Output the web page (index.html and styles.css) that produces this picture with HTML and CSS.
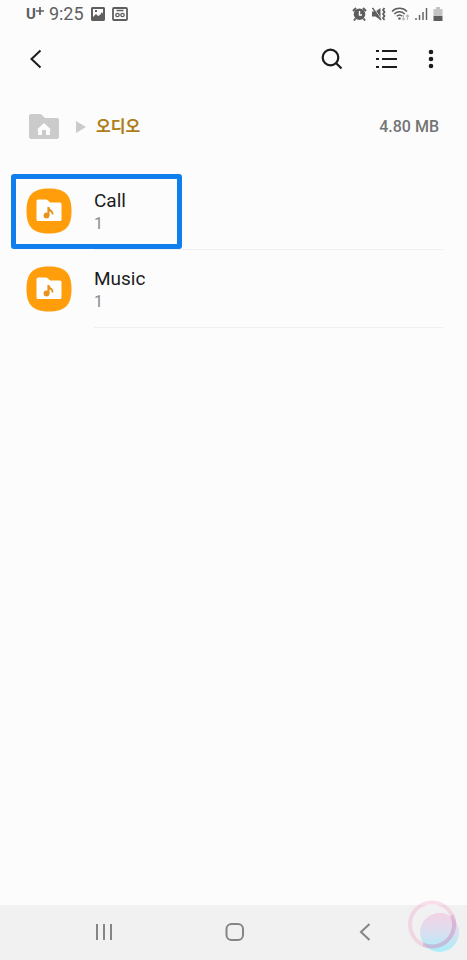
FILE: index.html
```html
<!DOCTYPE html>
<html lang="ko">
<head>
<meta charset="utf-8">
<meta name="viewport" content="width=device-width, initial-scale=1">
<title>오디오</title>
<link rel="stylesheet" href="styles.css">
</head>
<body>
<header class="status">
  <span class="carrier">U<svg width="8" height="10" viewBox="0 0 8 10"><path d="M4 2v8M0 6h8" stroke="currentColor" stroke-width="1.700"/></svg></span>
  <span class="clock">9:25</span>
  <svg class="note" width="14" height="14" viewBox="0 0 14 14"><path fill="currentColor" fill-rule="evenodd" d="M1 0h12l1 1v12l-1 1H1l-1-1V1zM2 2v8l3-3 2 2 2-1 2-3 1 2V2zM4 3h2v2H4z"/></svg>
  <svg class="note" width="16" height="14" viewBox="0 0 16 14" fill="none" stroke="currentColor"><rect x="1" y="1" width="14" height="12" rx="1" stroke-width="1.800"/><path d="M4.500 3.500h7" stroke-width="1.500"/><circle cx="5.500" cy="8" r="1.700" stroke-width="1.300"/><circle cx="10.500" cy="8" r="1.700" stroke-width="1.300"/></svg>
  <span class="system">
    <svg width="15" height="14" viewBox="0 0 15 14"><circle cx="7.500" cy="7.200" r="5.800" fill="currentColor"/><path d="M1 4l3-3M14 4l-3-3M3.500 11.500L2 13.500M11.500 11.500l1.500 2" stroke="currentColor" stroke-width="2"/><path d="M7.500 4v4H10" fill="none" stroke="#fcfcfc" stroke-width="1.400"/></svg>
    <svg width="14" height="14" viewBox="0 0 14 14"><path d="M0 4.500h3.500L8.500 1v12l-5-3.500H0z" fill="currentColor"/><path d="M1.500.5l8 12" stroke="#fcfcfc" stroke-width="1"/><path d="M.5 1l8.500 12" stroke="currentColor" stroke-width="1.300"/><path d="M12.500 1l-1.500 2 1.500 2-1.500 2 1.500 2-1.500 2 1.500 2" fill="none" stroke="currentColor" stroke-width="1.800"/></svg>
    <svg width="19" height="14" viewBox="0 0 19 14" fill="none" stroke="currentColor" stroke-width="1.500"><path d="M1 4.500C5 .2 12 .2 16 4.500M3.300 7c3-3 7.400-3 10.400 0M5.700 9.300c1.700-1.600 4-1.600 5.600 0"/><circle cx="8.500" cy="11.500" r="1.200" fill="currentColor" stroke="none"/><g stroke="#bbb" stroke-width="1.200"><path d="M12.500 8v5M11 11.500l1.500 1.500 1.500-1.500M16.500 13V8M15 9.500L16.500 8 18 9.500"/></g></svg>
    <svg width="13" height="14" viewBox="0 0 13 14" stroke="currentColor" stroke-width="1.400"><path d="M1 11v2M4.500 8v5M8 5v8M11.500 1v12"/></svg>
    <svg width="10" height="14" viewBox="0 0 10 14"><path d="M3 0h4v2h2.500v7H.5V2H3z" fill="#c4c4c4"/><path d="M.5 9h9v5h-9z" fill="currentColor"/></svg>
  </span>
</header>

<nav class="toolbar">
  <button class="icon" aria-label="뒤로"><svg width="24" height="24" viewBox="0 0 24 24"><path d="M16.500 3.500L7.500 12l9 8.500" fill="none" stroke="currentColor" stroke-width="2"/></svg></button>
  <button class="icon search" aria-label="검색"><svg width="24" height="24" viewBox="0 0 24 24" fill="none" stroke="currentColor" stroke-width="2.200"><circle cx="10.500" cy="10.500" r="7.800"/><path d="M16 16l5.500 5.500"/></svg></button>
  <button class="icon view" aria-label="보기 방식"><svg width="24" height="24" viewBox="0 0 24 24"><path d="M2 4h3M8 4h15M2 12h3M8 12h15M2 20h3M8 20h15" stroke="currentColor" stroke-width="2"/></svg></button>
  <button class="icon more" aria-label="더보기"><svg width="24" height="24" viewBox="0 0 24 24" fill="currentColor"><circle cx="12" cy="5" r="2.300"/><circle cx="12" cy="12" r="2.300"/><circle cx="12" cy="19" r="2.300"/></svg></button>
</nav>

<main>
  <div class="path">
    <a class="home" href="#" aria-label="홈"><svg width="32" height="26" viewBox="0 0 32 26"><path d="M3 0h9q1 0 2 1l3 3h12q2 0 2 2v17q0 2-2 2H3q-2 0-2-2V2q0-2 2-2z" fill="#cbcbcb"/><path d="M16 9l7 6.500h-1V21h-4v-5h-4v5h-4v-5.500H9z" fill="#fcfcfc"/></svg></a>
    <svg width="10" height="12" viewBox="0 0 10 12"><path d="M0 0l10 6-10 6z" fill="#cbcbcb"/></svg>
    <a class="current" href="#">오디오</a>
    <span class="size">4.80 MB</span>
  </div>

  <ul class="list">
    <li class="row selected">
      <svg class="folder" width="46" height="46" viewBox="0 0 46 46"><path d="M23 .5C39 .5 45.500 7 45.500 23S39 45.500 23 45.500.5 39 .5 23 7 .5 23 .5z" fill="#ff9d0a"/><path d="M12 11.500h8q1 0 2 1l2 2h10q1.500 0 1.500 1.500v15.500q0 1.500-1.500 1.500H12q-1.500 0-1.500-1.500V13q0-1.500 1.500-1.500z" fill="#fff"/><g fill="#e8931c"><circle cx="20.500" cy="27.500" r="2.900"/><path d="M21.400 19h2.100c0 3 4.200 2.800 4 7.500h-1.800c0-2-1-2.700-2.200-3v4.500h-2.100z"/></g></svg>
      <a class="info" href="#"><span class="name">Call</span><span class="count">1</span></a>
    </li>
    <li class="row">
      <svg class="folder" width="46" height="46" viewBox="0 0 46 46"><path d="M23 .5C39 .5 45.500 7 45.500 23S39 45.500 23 45.500.5 39 .5 23 7 .5 23 .5z" fill="#ff9d0a"/><path d="M12 11.500h8q1 0 2 1l2 2h10q1.500 0 1.500 1.500v15.500q0 1.500-1.500 1.500H12q-1.500 0-1.500-1.500V13q0-1.500 1.500-1.500z" fill="#fff"/><g fill="#e8931c"><circle cx="20.500" cy="27.500" r="2.900"/><path d="M21.400 19h2.100c0 3 4.200 2.800 4 7.500h-1.800c0-2-1-2.700-2.200-3v4.500h-2.100z"/></g></svg>
      <a class="info" href="#"><span class="name">Music</span><span class="count">1</span></a>
    </li>
  </ul>
</main>

<footer class="navbar">
  <button class="icon" aria-label="최근 앱"><svg width="24" height="24" viewBox="0 0 24 24"><path d="M5 3v16M12 3v16M19 3v16" stroke="currentColor" stroke-width="2"/></svg></button>
  <button class="icon" aria-label="홈 화면"><svg width="24" height="24" viewBox="0 0 24 24"><rect x="3.500" y="3" width="16.500" height="16" rx="5" fill="none" stroke="currentColor" stroke-width="2"/></svg></button>
  <button class="icon" aria-label="이전"><svg width="24" height="24" viewBox="0 0 24 24"><path d="M16.500 3L8 11l8.500 8" fill="none" stroke="currentColor" stroke-width="2"/></svg></button>
  <svg class="assist" width="52" height="54" viewBox="0 0 52 54"><defs><linearGradient id="bubble" x1="0" y1="0" x2="0" y2="1"><stop offset="0" stop-color="#f4d2e4"/><stop offset=".5" stop-color="#dadff0"/><stop offset="1" stop-color="#a9effa"/></linearGradient></defs><circle cx="31.500" cy="32.500" r="19.500" fill="url(#bubble)"/><circle cx="24" cy="24.500" r="22" fill="none" stroke="#ef9cc8" stroke-opacity=".32" stroke-width="4"/><path d="M44 15A22 22 0 0 1 15 44.500" fill="none" stroke="#a985bd" stroke-opacity=".25" stroke-width="4"/></svg>
</footer>
</body>
</html>
```
FILE: styles.css
```css
*,
*::after {
  box-sizing: border-box;
}

body {
  display: flex;
  flex-direction: column;
  min-height: 100vh;
  margin: 0;
  background: #fcfcfc;
  color: #1c1c1c;
  font-family: Roboto, "Noto Sans CJK KR", sans-serif;
}

svg {
  display: block;
  flex: none;
}

a {
  color: inherit;
  text-decoration: none;
}

.status {
  display: flex;
  align-items: center;
  height: 28px;
  padding: 0 24px 0 26px;
  color: #5e5e5e;
}

.carrier {
  display: flex;
  align-items: flex-start;
  font-size: 15px;
  font-weight: 700;
  line-height: 18px;
}

.clock {
  margin-left: 5px;
  font-size: 18px;
  line-height: 20px;
}

.note {
  margin-left: 7px;
}

.system {
  display: flex;
  gap: 5px;
  margin-left: auto;
}

.icon {
  display: flex;
  align-items: center;
  justify-content: center;
  width: 40px;
  height: 40px;
  padding: 0;
  border: 0;
  background: none;
  color: inherit;
}

.toolbar {
  display: flex;
  align-items: center;
  height: 62px;
  padding: 0 16px;
}

.search {
  margin-left: auto;
}

.view {
  margin-left: 14px;
}

.more {
  margin-left: 5px;
}

.path {
  display: flex;
  align-items: center;
  height: 74px;
  padding: 0 28px;
}

.home {
  margin-right: 16px;
}

.current {
  margin-left: 10px;
  color: #ad7d17;
  font-size: 16px;
  font-weight: 700;
  line-height: 20px;
}

.size {
  margin-left: auto;
  color: #747474;
  font-size: 16px;
  font-weight: 500;
  line-height: 22px;
}

.list {
  margin: 8px 0 0;
  padding: 0 24px 0 26px;
  list-style: none;
}

.row {
  position: relative;
  display: flex;
  align-items: center;
  gap: 22px;
  height: 78px;
}

.info {
  display: flex;
  flex: 1;
  flex-direction: column;
  justify-content: center;
  height: 100%;
  padding-top: 3px;
  border-bottom: 1px solid #f0f0f0;
}

.name {
  font-size: 19px;
  line-height: 24px;
}

.count {
  color: #8a8a8a;
  font-size: 16px;
  line-height: 22px;
}

.selected::after {
  position: absolute;
  top: 2px;
  bottom: 1px;
  left: -15px;
  width: 171px;
  border: 5px solid #0f7fee;
  border-radius: 3px;
  content: "";
}

.navbar {
  position: relative;
  display: flex;
  align-items: center;
  justify-content: space-between;
  height: 55px;
  margin-top: auto;
  padding: 0 82px 0 84px;
  background: #f1f1f1;
  color: #858585;
}

.assist {
  position: absolute;
  right: 7px;
  bottom: 6px;
}
```
